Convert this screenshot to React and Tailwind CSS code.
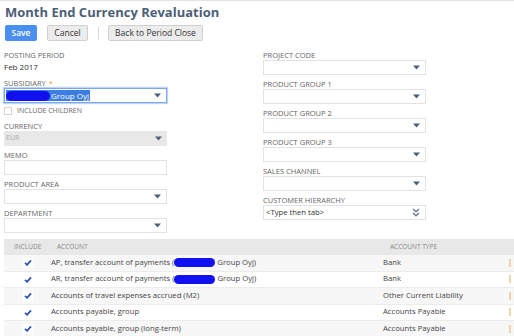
import React from 'react'

const font = { fontFamily: '"Open Sans", "Noto Sans", sans-serif' }

function Arrow() {
  return (
    <svg width="7" height="5" viewBox="0 0 7 5" className="shrink-0">
      <path d="M0 0.5h7L3.5 4.5z" fill="#4d5f79" />
    </svg>
  )
}

function DoubleArrow() {
  return (
    <svg width="8" height="9" viewBox="0 0 8 9" className="shrink-0">
      <path d="M1 1l3 2.8 3-2.8M1 5l3 2.8 3-2.8" stroke="#6b7c95" strokeWidth="1.5" fill="none" />
    </svg>
  )
}

function Label({ children, star }) {
  return (
    <div className="h-[10px] text-[7.5px] leading-[10px] uppercase text-[#666]">
      {children}
      {star && <span className="ml-[3px] text-[#e8a33d]">*</span>}
    </div>
  )
}

function Select({ children, arrow = true, double = false }) {
  return (
    <div className="flex h-[15px] w-[163px] items-center justify-between border border-[#e2e2e2] bg-white pl-[2px] pr-[5px]">
      <span className="truncate text-[7.7px] text-[#333]">{children}</span>
      {double ? <DoubleArrow /> : arrow ? <Arrow /> : null}
    </div>
  )
}

function Field({ label, children, className = '' }) {
  return (
    <div className={`flex flex-col ${className}`}>
      <Label>{label}</Label>
      {children}
    </div>
  )
}

function Blob({ w }) {
  return <span className="inline-block h-[9px] rounded-full bg-[#1010f0] align-middle" style={{ width: w }} />
}

function Check() {
  return (
    <svg width="8" height="7" viewBox="0 0 8 7">
      <path d="M1 3.8l2.1 2L7 1.3" stroke="#2c55b3" strokeWidth="1.8" fill="none" />
    </svg>
  )
}

const rows = [
  { name: <>AP, transfer account of payments (<Blob w={41} /> Group Oyj)</>, type: 'Bank' },
  { name: <>AR, transfer account of payments (<Blob w={41} /> Group Oyj)</>, type: 'Bank' },
  { name: 'Accounts of travel expenses accrued (M2)', type: 'Other Current Liability' },
  { name: 'Accounts payable, group', type: 'Accounts Payable' },
  { name: 'Accounts payable, group (long-term)', type: 'Accounts Payable' },
]

export default function App() {
  return (
    <div className="h-[336px] w-[514px] overflow-hidden border-t border-[#e4e4e4] bg-white" style={font}>
      <div className="pl-[5px] pt-[1px]">
        <h1 className="text-[13px] font-bold leading-[21px] text-[#4d5f79]">Month End Currency Revaluation</h1>
        <div className="mt-[2px] flex h-[16px] items-center">
          <button className="h-[16px] w-[32px] rounded-[2px] bg-[#4a8ef2] text-[8.5px] font-semibold text-white">Save</button>
          <button className="ml-[10px] h-[16px] w-[41px] rounded-[2px] border border-[#d0d0d0] bg-[#ececec] text-[8.5px] text-[#333]">Cancel</button>
          <div className="ml-[10px] h-[13px] w-px bg-[#d8d8d8]" />
          <button className="ml-[9px] h-[16px] w-[95px] rounded-[2px] border border-[#d0d0d0] bg-[#ececec] text-[8.5px] text-[#333]">Back to Period Close</button>
        </div>
      </div>

      <div className="mt-[9px] grid grid-cols-[163px_163px] gap-x-[96px] pl-[4px]">
        <div className="flex flex-col">
          <Label>Posting Period</Label>
          <div className="mt-[1px] h-[12px] text-[8px] leading-[12px] text-[#333]">Feb 2017</div>
          <div className="mt-[5px]">
            <Label star>Subsidiary</Label>
            <div className="flex h-[15px] w-[163px] items-center justify-between border border-[#7aa7e6] bg-white pl-[1px] pr-[5px] shadow-[0_0_1px_1px_#bcd4f5]">
              <span className="flex h-[11px] items-center bg-[#3b7de0] pr-[1px] text-[8px] leading-[11px] text-white">
                <span className="inline-block h-[10px] w-[44px] rounded-full bg-[#1010f0]" />
                <span className="ml-[1px]">Group Oyj</span>
              </span>
              <Arrow />
            </div>
          </div>
          <div className="mt-[3px] flex h-[10px] items-center">
            <span className="h-[8px] w-[8px] border border-[#d4d4d4] bg-white" />
            <span className="ml-[5px] text-[7px] uppercase text-[#666]">Include Children</span>
          </div>
          <Field label="Currency" className="mt-[5px]">
            <div className="flex h-[15px] w-[163px] items-center justify-between bg-[#e8e8e8] pl-[2px] pr-[5px]">
              <span className="text-[7px] text-[#aaa]">EUR</span>
              <Arrow />
            </div>
          </Field>
          <Field label="Memo" className="mt-[4px]">
            <Select arrow={false} />
          </Field>
          <Field label="Product Area" className="mt-[4px]">
            <Select />
          </Field>
          <Field label="Department" className="mt-[4px]">
            <Select />
          </Field>
        </div>

        <div className="flex flex-col">
          <Field label="Project Code">
            <Select />
          </Field>
          {['Product Group 1', 'Product Group 2', 'Product Group 3', 'Sales Channel'].map((l) => (
            <Field key={l} label={l} className="mt-[4px]">
              <Select />
            </Field>
          ))}
          <Field label="Customer Hierarchy" className="mt-[4px]">
            <Select double>&lt;Type then tab&gt;</Select>
          </Field>
        </div>
      </div>

      <div className="ml-[4px] mt-[6px]">
        <div className="flex h-[16px] items-center bg-[#e8e8e8] text-[6.5px] uppercase text-[#888]">
          <div className="w-[47px] pl-[10px]">Include</div>
          <div className="w-[332px] pl-[6px]">Account</div>
          <div className="flex-1 pl-[7px]">Account Type</div>
        </div>
        {rows.map((r, i) => (
          <div
            key={i}
            className={`flex h-[16.5px] items-center border-b border-[#ececec] text-[7.7px] text-[#444] ${i % 2 === 0 ? 'bg-[#f7f7f7]' : 'bg-white'}`}
          >
            <div className="flex w-[47px] justify-center">
              <span className="flex h-[10px] w-[10px] items-center justify-center bg-white">
                <Check />
              </span>
            </div>
            <div className="w-[332px] whitespace-nowrap">{r.name}</div>
            <div className="w-[126px] whitespace-nowrap">{r.type}</div>
            <div className="h-[8px] w-[2px] bg-[#e6d7ad]" />
          </div>
        ))}
      </div>
    </div>
  )
}
